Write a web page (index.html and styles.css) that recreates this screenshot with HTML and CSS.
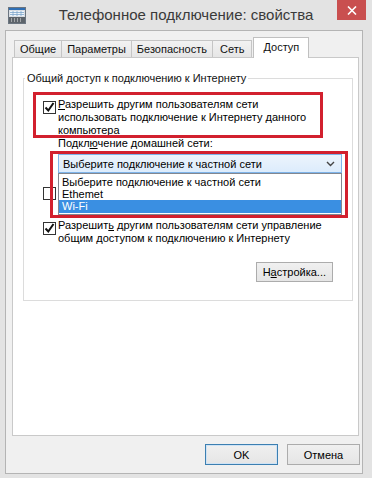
FILE: index.html
```html
<!DOCTYPE html>
<html lang="ru">
<head>
    <meta charset="UTF-8">
    <meta name="viewport" content="width=device-width, initial-scale=1.0">
    <title>Телефонное подключение: свойства</title>
    <link rel="stylesheet" href="styles.css">
</head>
<body>
    <div class="window">
        <div class="titlebar">
            <svg class="app-icon" width="18" height="17" viewBox="0 0 18 17">
                <rect x="0.5" y="0.5" width="17" height="16" fill="#d8dde3" stroke="#6b7580"/>
                <rect x="1" y="1" width="16" height="2" fill="#2f6fb5"/>
                <rect x="2" y="4" width="14" height="5" fill="#eef5fb"/>
                <path d="M2 5.5h14M2 7.5h14M5 4v5M9 4v5M13 4v5" stroke="#7ea6cc" stroke-width="0.8"/>
                <rect x="1" y="10" width="16" height="6" fill="#5d646b"/>
                <path d="M3 12h1M6 12h1M9 12h1M12 12h1M3 14h1M6 14h1M9 14h1M12 14h1" stroke="#e8e8e8" stroke-width="1"/>
            </svg>
            <div class="title">Телефонное подключение: свойства</div>
            <div class="close-btn">
                <svg width="10" height="9" viewBox="0 0 10 9">
                    <path d="M1 0.5l8 8M9 0.5l-8 8" stroke="#fff" stroke-width="1.6"/>
                </svg>
            </div>
        </div>

        <div class="dialog">
            <div class="tabs">
                <div class="tab">Общие</div>
                <div class="tab">Параметры</div>
                <div class="tab">Безопасность</div>
                <div class="tab tab-net">Сеть</div>
                <div class="tab active">Доступ</div>
            </div>

            <div class="panel">
                <fieldset class="group">
                    <legend>Общий доступ к подключению к Интернету</legend>

                    <div class="check-row first-row">
                        <span class="checkbox checked">
                            <svg width="11" height="11" viewBox="0 0 11 11"><path d="M1.5 5.5l2.8 3 5.2-7.5" fill="none" stroke="#111" stroke-width="2"/></svg>
                        </span>
                        <span class="check-text"><u>Р</u>азрешить другим пользователям сети<br>использовать подключение к Интернету данного<br>компьютера</span>
                        <div class="mark mark-first"></div>
                    </div>

                    <div class="field-label">Подкл<u>ю</u>чение домашней сети:</div>

                    <div class="combo-wrap">
                        <div class="combo">
                            <span>Выберите подключение к частной сети</span>
                            <svg width="9" height="6" viewBox="0 0 9 6"><path d="M1 1l3.5 3.5L8 1" fill="none" stroke="#444" stroke-width="1.4"/></svg>
                        </div>
                        <ul class="dropdown">
                            <li>Выберите подключение к частной сети</li>
                            <li>Ethemet</li>
                            <li class="selected">Wi-Fi</li>
                        </ul>
                        <div class="mark mark-combo"></div>
                    </div>

                    <div class="check-row hidden-row">
                        <span class="checkbox"></span>
                    </div>

                    <div class="check-row">
                        <span class="checkbox checked">
                            <svg width="11" height="11" viewBox="0 0 11 11"><path d="M1.5 5.5l2.8 3 5.2-7.5" fill="none" stroke="#111" stroke-width="2"/></svg>
                        </span>
                        <span class="check-text">Разрешит<u>ь</u> другим пользователям сети управление<br>общим доступом к подключению к Интернету</span>
                    </div>

                    <div class="settings-row">
                        <button class="btn">Н<u>а</u>стройка...</button>
                    </div>
                </fieldset>
            </div>

            <div class="footer">
                <button class="btn btn-footer default">OK</button>
                <button class="btn btn-footer">Отмена</button>
            </div>
        </div>
    </div>
</body>
</html>
```

FILE: styles.css
```css
* {
    box-sizing: border-box;
}
body {
    margin: 0;
    font-family: "Liberation Sans", Arial, sans-serif;
    font-size: 11px;
    color: #000;
}
.window {
    width: 372px;
    height: 478px;
    background-color: #e3e3e3;
    display: flex;
    flex-direction: column;
}
.titlebar {
    height: 30px;
    display: grid;
    grid-template-columns: 1fr auto 1fr;
    align-items: start;
}
.app-icon {
    margin: 7px 0 0 8px;
}
.title {
    font-size: 15px;
    color: #3a3a3a;
    margin-top: 6px;
    line-height: 18px;
    white-space: nowrap;
}
.close-btn {
    justify-self: end;
    width: 29px;
    height: 20px;
    margin-right: 6px;
    background-color: #c94f4f;
    display: flex;
    align-items: center;
    justify-content: center;
}
.dialog {
    flex: 1;
    margin: 0 9px 4px 5px;
    border: 1px solid #b4b4b4;
    background-color: #f0f0f0;
    padding: 6px 2px 0 6px;
    display: flex;
    flex-direction: column;
}
.tabs {
    display: flex;
    align-items: flex-end;
    height: 20px;
    padding-left: 2px;
}
.tab {
    height: 17px;
    line-height: 16px;
    padding: 0 5px;
    margin-left: -1px;
    border: 1px solid #c5c5c5;
    border-bottom: none;
    background: linear-gradient(#f2f2f2, #e6e6e6);
    color: #111;
}
.tab:first-child {
    margin-left: 0;
}
.tab-net {
    padding: 0 7px;
}
.tab.active {
    height: 21px;
    line-height: 19px;
    margin-bottom: -1px;
    margin-left: 1px;
    padding: 0 9px;
    background: #fff;
    border-color: #c0c0c0;
    position: relative;
    z-index: 1;
}
.panel {
    height: 379px;
    margin-right: 1px;
    background-color: #fff;
    border: 1px solid #c9c9c9;
    padding: 13px 5px 0 10px;
}
.group {
    margin: 0;
    padding: 0 0 18px 0;
    border: 1px solid #dcdcdc;
}
.group legend {
    margin-left: 1px;
    padding: 0 2px;
    line-height: 14px;
    color: #111;
}
.check-row {
    display: flex;
    align-items: flex-start;
    margin-left: 19px;
    line-height: 13px;
    position: relative;
}
.first-row {
    margin-top: 13px;
}
.hidden-row {
    height: 26px;
    margin-top: 11px;
}
.hidden-row + .check-row {
    margin-top: 9px;
}
.checkbox {
    width: 13px;
    height: 13px;
    margin-top: 3px;
    margin-right: 2px;
    border: 1px solid #333;
    background-color: #fff;
    flex-shrink: 0;
    display: flex;
    align-items: center;
    justify-content: center;
}
.check-text {
    white-space: nowrap;
}
.field-label {
    margin-left: 34px;
    line-height: 13px;
}
.combo-wrap {
    position: relative;
    width: 284px;
    margin: 4px 0 0 34px;
}
.combo {
    height: 19px;
    border: 1px solid #7eb4ea;
    background: linear-gradient(#ecf4fc, #dcecfc);
    display: flex;
    align-items: center;
    justify-content: space-between;
    padding: 0 6px 0 4px;
}
.dropdown {
    position: absolute;
    top: 19px;
    left: 0;
    width: 284px;
    margin: 0;
    padding: 2px 0 1px;
    list-style: none;
    background-color: #fff;
    border: 1px solid #828790;
    z-index: 2;
}
.dropdown li {
    line-height: 12px;
    height: 12px;
    padding-left: 3px;
}
.dropdown li.selected {
    height: 13px;
    line-height: 13px;
    background-color: #3a8fe2;
    color: #fff;
}
.mark {
    position: absolute;
    border: 3px solid #d2202e;
    z-index: 3;
}
.mark-first {
    left: -10px;
    top: -6px;
    width: 290px;
    height: 46px;
}
.mark-combo {
    left: -8px;
    top: -3px;
    width: 298px;
    height: 67px;
}
.settings-row {
    display: flex;
    justify-content: flex-end;
    margin: 17px 19px 0 0;
}
.btn {
    font-family: "Liberation Sans", Arial, sans-serif;
    font-size: 11px;
    color: #000;
    height: 20px;
    padding: 0 6px;
    background: linear-gradient(#f0f0f0, #e5e5e5);
    border: 1px solid #acacac;
    border-radius: 0;
}
.footer {
    display: flex;
    justify-content: flex-end;
    gap: 9px;
    padding-top: 8px;
}
.btn-footer {
    width: 73px;
    height: 21px;
}
.btn-footer.default {
    border-color: #3c7fb1;
    box-shadow: inset 0 0 0 1px #cfe3f5;
}
```
